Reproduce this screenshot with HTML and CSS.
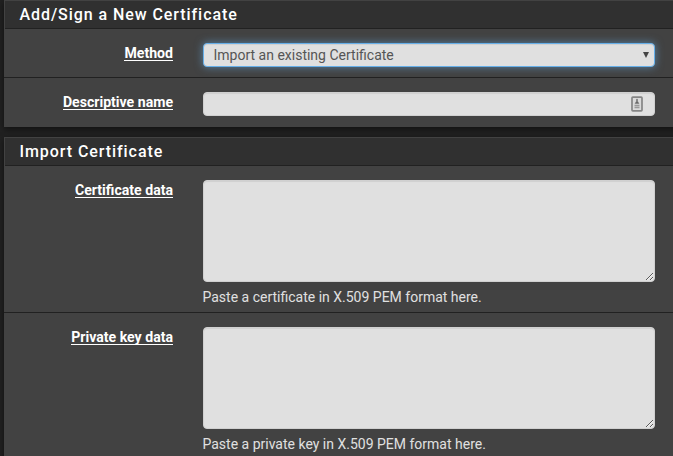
FILE: index.html
```html
<!DOCTYPE html>
<html lang="en">
<head>
<meta charset="utf-8">
<title>Certificates</title>
<link rel="stylesheet" href="styles.css">
</head>
<body>
<form>
  <section class="panel">
    <h2 class="panel-title">Add/Sign a New Certificate</h2>
    <div class="row">
      <label class="label" for="method"><span>Method</span></label>
      <div class="field">
        <div class="control select focused" id="method">
          <span>Import an existing Certificate</span>
          <svg class="arrow" width="6" height="6" viewBox="0 0 6 6"><path d="M0 0h6L3 6z" fill="#444"/></svg>
        </div>
      </div>
    </div>
    <div class="row">
      <label class="label"><span>Descriptive name</span></label>
      <div class="field">
        <div class="control name-input">
          <svg width="12" height="16" viewBox="0 0 12 16"><rect x="1" y="1.2" width="10" height="13.6" rx=".8" fill="#dadada" stroke="#858585" stroke-width="1.7"/><path d="M5.5 3.2h1v2l1.4 2.3H4.1l1.4-2.3z" fill="#666" stroke="#777" stroke-width=".6"/><path d="M3.5 9.5h5M3.5 11.5h5" stroke="#999" stroke-width="1.4"/></svg>
        </div>
      </div>
    </div>
  </section>
  <section class="panel">
    <h2 class="panel-title">Import Certificate</h2>
    <div class="row">
      <label class="label" for="cert"><span>Certificate data</span></label>
      <div class="field">
        <textarea class="control area" id="cert"></textarea>
        <p class="help">Paste a certificate in X.509 PEM format here.</p>
      </div>
    </div>
    <div class="row">
      <label class="label" for="key"><span>Private key data</span></label>
      <div class="field">
        <textarea class="control area" id="key"></textarea>
        <p class="help">Paste a private key in X.509 PEM format here.</p>
      </div>
    </div>
  </section>
</form>
</body>
</html>
```
FILE: styles.css
```css
* { box-sizing: border-box; }
html { overflow: hidden; }
body {
  margin: 0;
  height: 456px;
  overflow: hidden;
  background: #212121;
  color: #e0e0e0;
  font: 14px/20px Roboto, "Liberation Sans", sans-serif;
}
form { padding-left: 4px; }
.panel {
  width: 680px;
  margin-bottom: 10px;
  background: #424242;
  border: solid #424242;
  border-width: 1px 0 0 1px;
  box-shadow: 0 2px 6px rgba(0, 0, 0, .5);
}
.panel-title {
  margin: 0;
  height: 28px;
  padding: 4px 15px 0 14.5px;
  background: #303030;
  border-bottom: 1px solid #212121;
  color: #fff;
  font-size: 16px;
  font-weight: 500;
  line-height: 19px;
  letter-spacing: .93px;
}
.row {
  display: flex;
  margin-left: -1px;
  padding: 14px 0 10px;
  border-bottom: 1px solid #212121;
}
.row:last-child { padding-bottom: 11px; border-bottom: 0; }
.label {
  width: 169px;
  height: 20px;
  color: #fff;
  font-size: 14.1px;
  font-weight: 700;
  line-height: 20px;
  text-align: right;
}
.label span {
  display: inline-block;
  height: 18px;
  border-bottom: 1px solid #fff;
}
.field { width: 452px; margin-left: 30px; }
.control {
  display: flex;
  align-items: center;
  width: 100%;
  height: 24px;
  background: #e0e0e0;
  border: 1px solid #d0d0d0;
  border-radius: 4px;
  box-shadow: inset 0 1px 1px rgba(0, 0, 0, .075);
  color: #555;
}
.select { justify-content: space-between; padding: 0 5px 0 9.5px; }
.focused {
  border-color: #66afe9;
  box-shadow: inset 0 1px 1px rgba(0, 0, 0, .075), 0 0 8px rgba(102, 175, 233, .6);
}
.name-input { justify-content: flex-end; padding-right: 11px; }
.area { display: block; height: 102px; margin: 0; resize: both; outline: 0; }
.help { margin: 5px 0 -5px -.5px; }
```
